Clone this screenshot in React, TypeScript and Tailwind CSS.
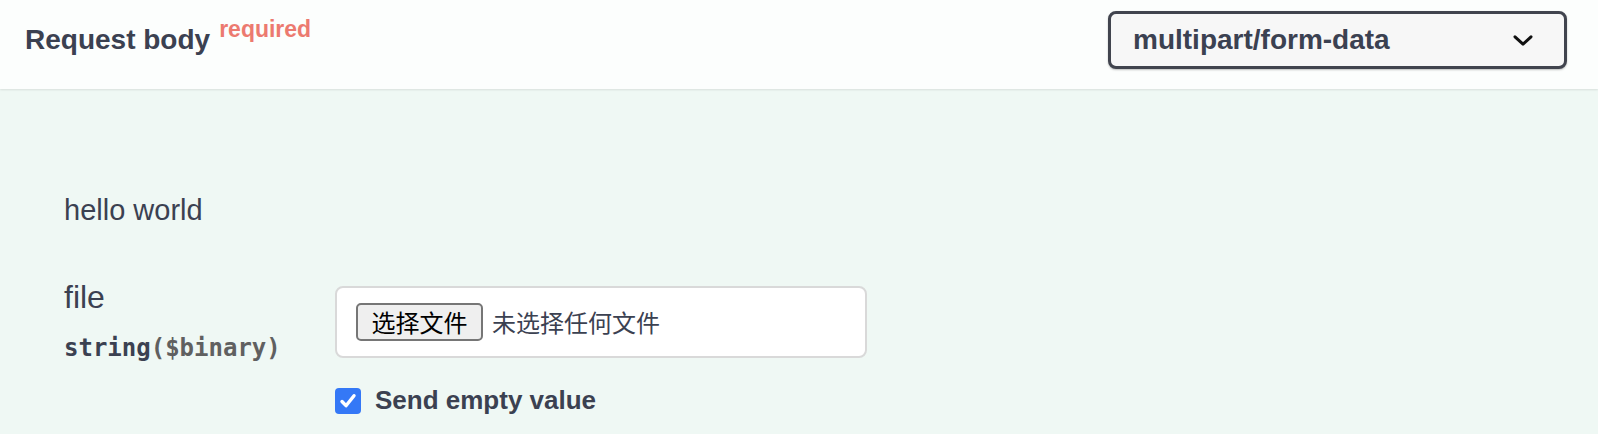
const sans = "font-['Liberation_Sans','Noto_Sans_CJK_SC',sans-serif]";
const cjk = "font-['Noto_Sans_CJK_SC','Liberation_Sans',sans-serif]";

export default function App() {
  return (
    <div className={`min-h-screen flex flex-col bg-[#eff8f4] text-[#3b4151] ${sans}`}>
      {/* Section header */}
      <div className="relative z-10 flex justify-between h-[89px] pl-[25px] pr-[31px] bg-[#fcfefd] shadow-[0_1px_2px_rgba(0,0,0,0.1)]">
        <h4 className="pt-[26px] text-[28px] leading-[28px] font-bold">
          Request body
          <span className="ml-[9px] align-[12px] text-[23px] leading-[0px] font-bold text-[#ec7a70]">required</span>
        </h4>
        <div className="mt-[11px] flex items-center justify-between w-[459px] h-[58px] pl-[22px] pr-[31px] border-[3px] border-[#41444e] rounded-[8px] bg-[#f7f7f7] shadow-[0_1px_2px_rgba(0,0,0,0.25)]">
          <span className="text-[28px] font-bold leading-none">multipart/form-data</span>
          <svg viewBox="0 0 20 11" className="w-[20px] h-[11px]" fill="none" stroke="#111" strokeWidth={3} strokeLinecap="round" strokeLinejoin="round">
            <path d="M2 1.8l8 7.4 8-7.4" />
          </svg>
        </div>
      </div>

      {/* Body */}
      <div className="flex-1 pt-[101px] pl-[64px]">
        <p className="text-[29px] leading-[40px]">hello world</p>

        <div className="mt-[56px] flex">
          <div className="w-[271px] flex flex-col">
            <span className="text-[32px] leading-[22px]">file</span>
            <span className="mt-[26px] font-['DejaVu_Sans_Mono',monospace] font-bold text-[24px] leading-[28px]">
              string<span className="text-[#606060]">($binary)</span>
            </span>
          </div>
          <div className="flex flex-col">
            <div className="flex items-center w-[532px] h-[72px] px-[19px] border-2 border-[#d9d9d9] rounded-[8px] bg-white">
              <button className={`h-[38px] w-[127px] border-2 border-[#767676] rounded-[5px] bg-[#efefef] text-black text-[24px] leading-none ${cjk}`}>
                选择文件
              </button>
              <span className={`ml-[9px] text-[24px] ${cjk}`}>未选择任何文件</span>
            </div>
            <label className="mt-[23px] flex items-center gap-[14px]">
              <span className="flex items-center justify-center w-[26px] h-[26px] rounded-[4px] bg-[#3478f6]">
                <svg viewBox="0 0 20 20" className="w-[20px] h-[20px]" fill="none" stroke="white" strokeWidth={3.4} strokeLinecap="round" strokeLinejoin="round">
                  <path d="M4 10.5l4 4.2 8-10" />
                </svg>
              </span>
              <span className="text-[26px] font-bold">Send empty value</span>
            </label>
          </div>
        </div>
      </div>
    </div>
  );
}
